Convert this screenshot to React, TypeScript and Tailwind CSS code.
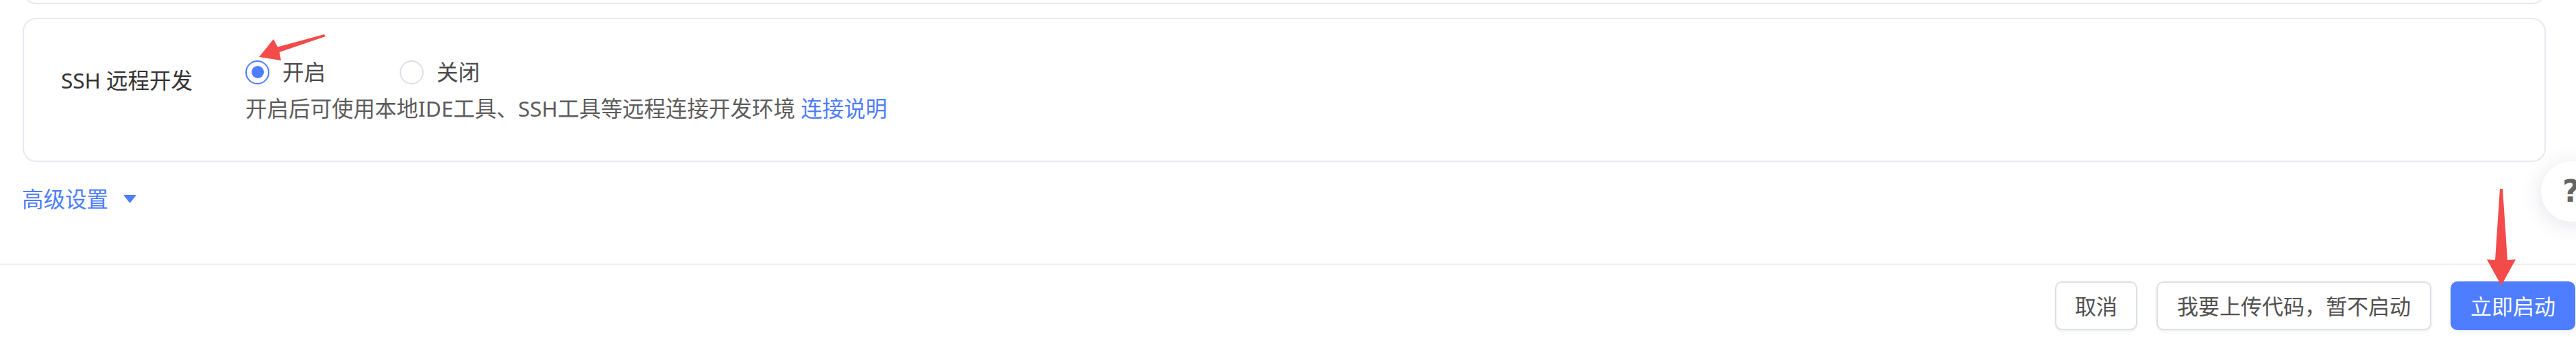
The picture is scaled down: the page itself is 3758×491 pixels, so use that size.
const FONT = "font-['Noto_Sans','Noto_Sans_CJK_SC',sans-serif]";

const Radio = ({ checked, label }: { checked: boolean; label: string }) => (
  <label className="flex items-center gap-[19px]">
    <span
      className={`flex h-[35px] w-[35px] items-center justify-center rounded-full border-2 ${
        checked ? "border-[#4e7dff]" : "border-[#dcdfe6]"
      }`}
    >
      {checked && <span className="h-[18px] w-[18px] rounded-full bg-[#4e7dff]" />}
    </span>
    <span className="text-[#4a4a4a]">{label}</span>
  </label>
);

const App = () => {
  return (
    <div className={`relative h-[491px] w-full overflow-hidden bg-white text-[31.5px] leading-[48px] ${FONT}`}>
      {/* previous card, only its bottom edge is visible */}
      <div className="ml-[33px] mr-[44px] h-[6px] overflow-hidden">
        <div className="-mt-[34px] h-[40px] rounded-[20px] border-2 border-[#e6e9f0]" />
      </div>

      {/* SSH card */}
      <div className="ml-[33px] mr-[44px] mt-[20px] flex h-[210px] rounded-[20px] border-2 border-[#e6e9f0] pt-[53px]">
        <div className="ml-[54px] mt-[12px] w-[269px] text-[#333333]">SSH 远程开发</div>
        <div className="flex flex-col">
          <div className="flex items-center gap-[108px]">
            <Radio checked label="开启" />
            <Radio checked={false} label="关闭" />
          </div>
          <p className="mt-[5px] text-[#5c5c5c]">
            开启后可使用本地IDE工具、SSH工具等远程连接开发环境{" "}
            <a className="text-[#4e7dff]">连接说明</a>
          </p>
        </div>
      </div>

      {/* advanced settings */}
      <div className="ml-[32px] mt-[38px] flex h-[32px] items-center gap-[22px] leading-[32px] text-[#4e7dff]">
        <span>高级设置</span>
        <svg width="19" height="12" viewBox="0 0 19 12">
          <path d="M0 0 H19 L9.5 12 Z" fill="#4e7dff" />
        </svg>
      </div>

      <div className="mt-[78px] h-[2px] w-full bg-[#eeeeee]" />

      {/* footer buttons */}
      <div className="mt-[24px] flex justify-end gap-[28px] pr-[1px] text-[31px]">
        <button className="h-[71px] rounded-[10px] border-2 border-[#dcdfe6] bg-white px-[27px] text-[#505050] shadow-[0_3px_4px_rgba(0,0,0,0.05)]">
          取消
        </button>
        <button className="h-[71px] rounded-[10px] border-2 border-[#dcdfe6] bg-white px-[28px] text-[#505050] shadow-[0_3px_4px_rgba(0,0,0,0.05)]">
          我要上传代码，暂不启动
        </button>
        <button className="h-[71px] rounded-[10px] bg-[#4e7dff] px-[29px] text-white shadow-[0_3px_4px_rgba(0,0,0,0.06)]">
          立即启动
        </button>
      </div>

      {/* floating help bubble */}
      <div className="absolute left-[3707px] top-[235px] flex h-[88px] w-[88px] items-center justify-center rounded-full bg-white shadow-[0_4px_30px_rgba(60,70,100,0.15)]">
        <span className="font-['DejaVu_Sans',sans-serif] text-[44px] font-bold leading-none text-[#666666]">?</span>
      </div>

      {/* red annotation arrows */}
      <svg className="pointer-events-none absolute left-0 top-0" width="3758" height="491">
        <polygon
          points="473,50 475,53 407.6,76 410,88 378,83 399,57 405,68.5"
          fill="#f34a4a"
          strokeLinejoin="round"
        />
        <polygon
          points="3647,275 3651,275 3658,379 3670,378 3649,416 3628,378 3640,379"
          fill="#f34a4a"
          strokeLinejoin="round"
        />
      </svg>
    </div>
  );
};

export default App;
